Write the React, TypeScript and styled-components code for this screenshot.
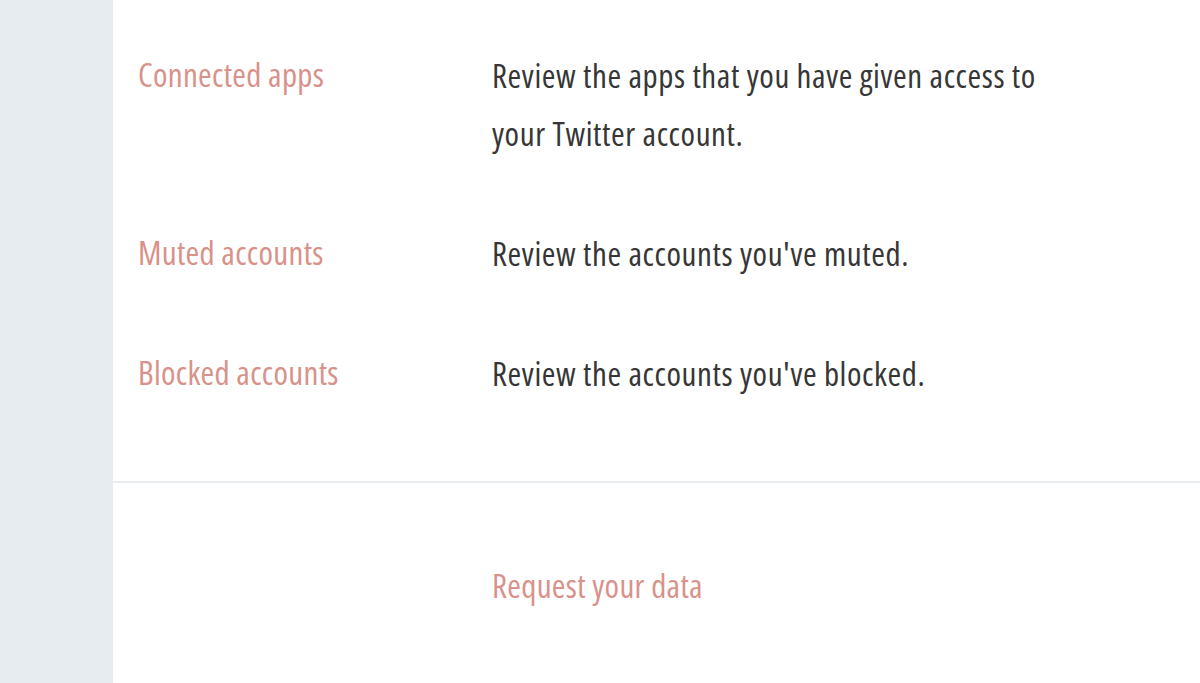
import styled, { createGlobalStyle } from "styled-components";

const GlobalStyle = createGlobalStyle`
  html, body {
    margin: 0;
    padding: 0;
    background: #fff;
  }
  body {
    font-family: "Open Sans", "Liberation Sans", sans-serif;
    font-stretch: 75%;
  }
`;

const Page = styled.div`
  display: flex;
  height: 683px;
  overflow: hidden;
`;

const Sidebar = styled.div`
  width: 113px;
  flex-shrink: 0;
  background-color: #e6ecf0;
`;

const Panel = styled.div`
  flex: 1;
  background-color: #fff;
  display: flex;
  flex-direction: column;
`;

const Section = styled.div`
  padding: 47px 0 78px 25px;
  display: flex;
  flex-direction: column;
  gap: 62px;
  border-bottom: 2px solid #e9edf0;
`;

const Row = styled.div`
  display: grid;
  grid-template-columns: 354px 1fr;
  align-items: start;
  font-size: 33px;
  line-height: 56px;
`;

const Label = styled.a`
  color: #d9928a;
  letter-spacing: 0.3px;
  text-decoration: none;
  cursor: pointer;
`;

const Description = styled.p`
  margin: 0;
  max-width: 570px;
  color: #363636;
  letter-spacing: 0.6px;
  line-height: 58px;
`;

const Footer = styled.div`
  padding: 75px 0 0 379px;
  font-size: 33px;
  line-height: 56px;
`;

const items = [
  {
    label: "Connected apps",
    text: "Review the apps that you have given access to your Twitter account.",
  },
  { label: "Muted accounts", text: "Review the accounts you've muted." },
  { label: "Blocked accounts", text: "Review the accounts you've blocked." },
];

export default function App() {
  return (
    <>
      <GlobalStyle />
      <Page>
        <Sidebar />
        <Panel>
          <Section>
            {items.map((item) => (
              <Row key={item.label}>
                <Label>{item.label}</Label>
                <Description>{item.text}</Description>
              </Row>
            ))}
          </Section>
          <Footer>
            <Label>Request your data</Label>
          </Footer>
        </Panel>
      </Page>
    </>
  );
}
